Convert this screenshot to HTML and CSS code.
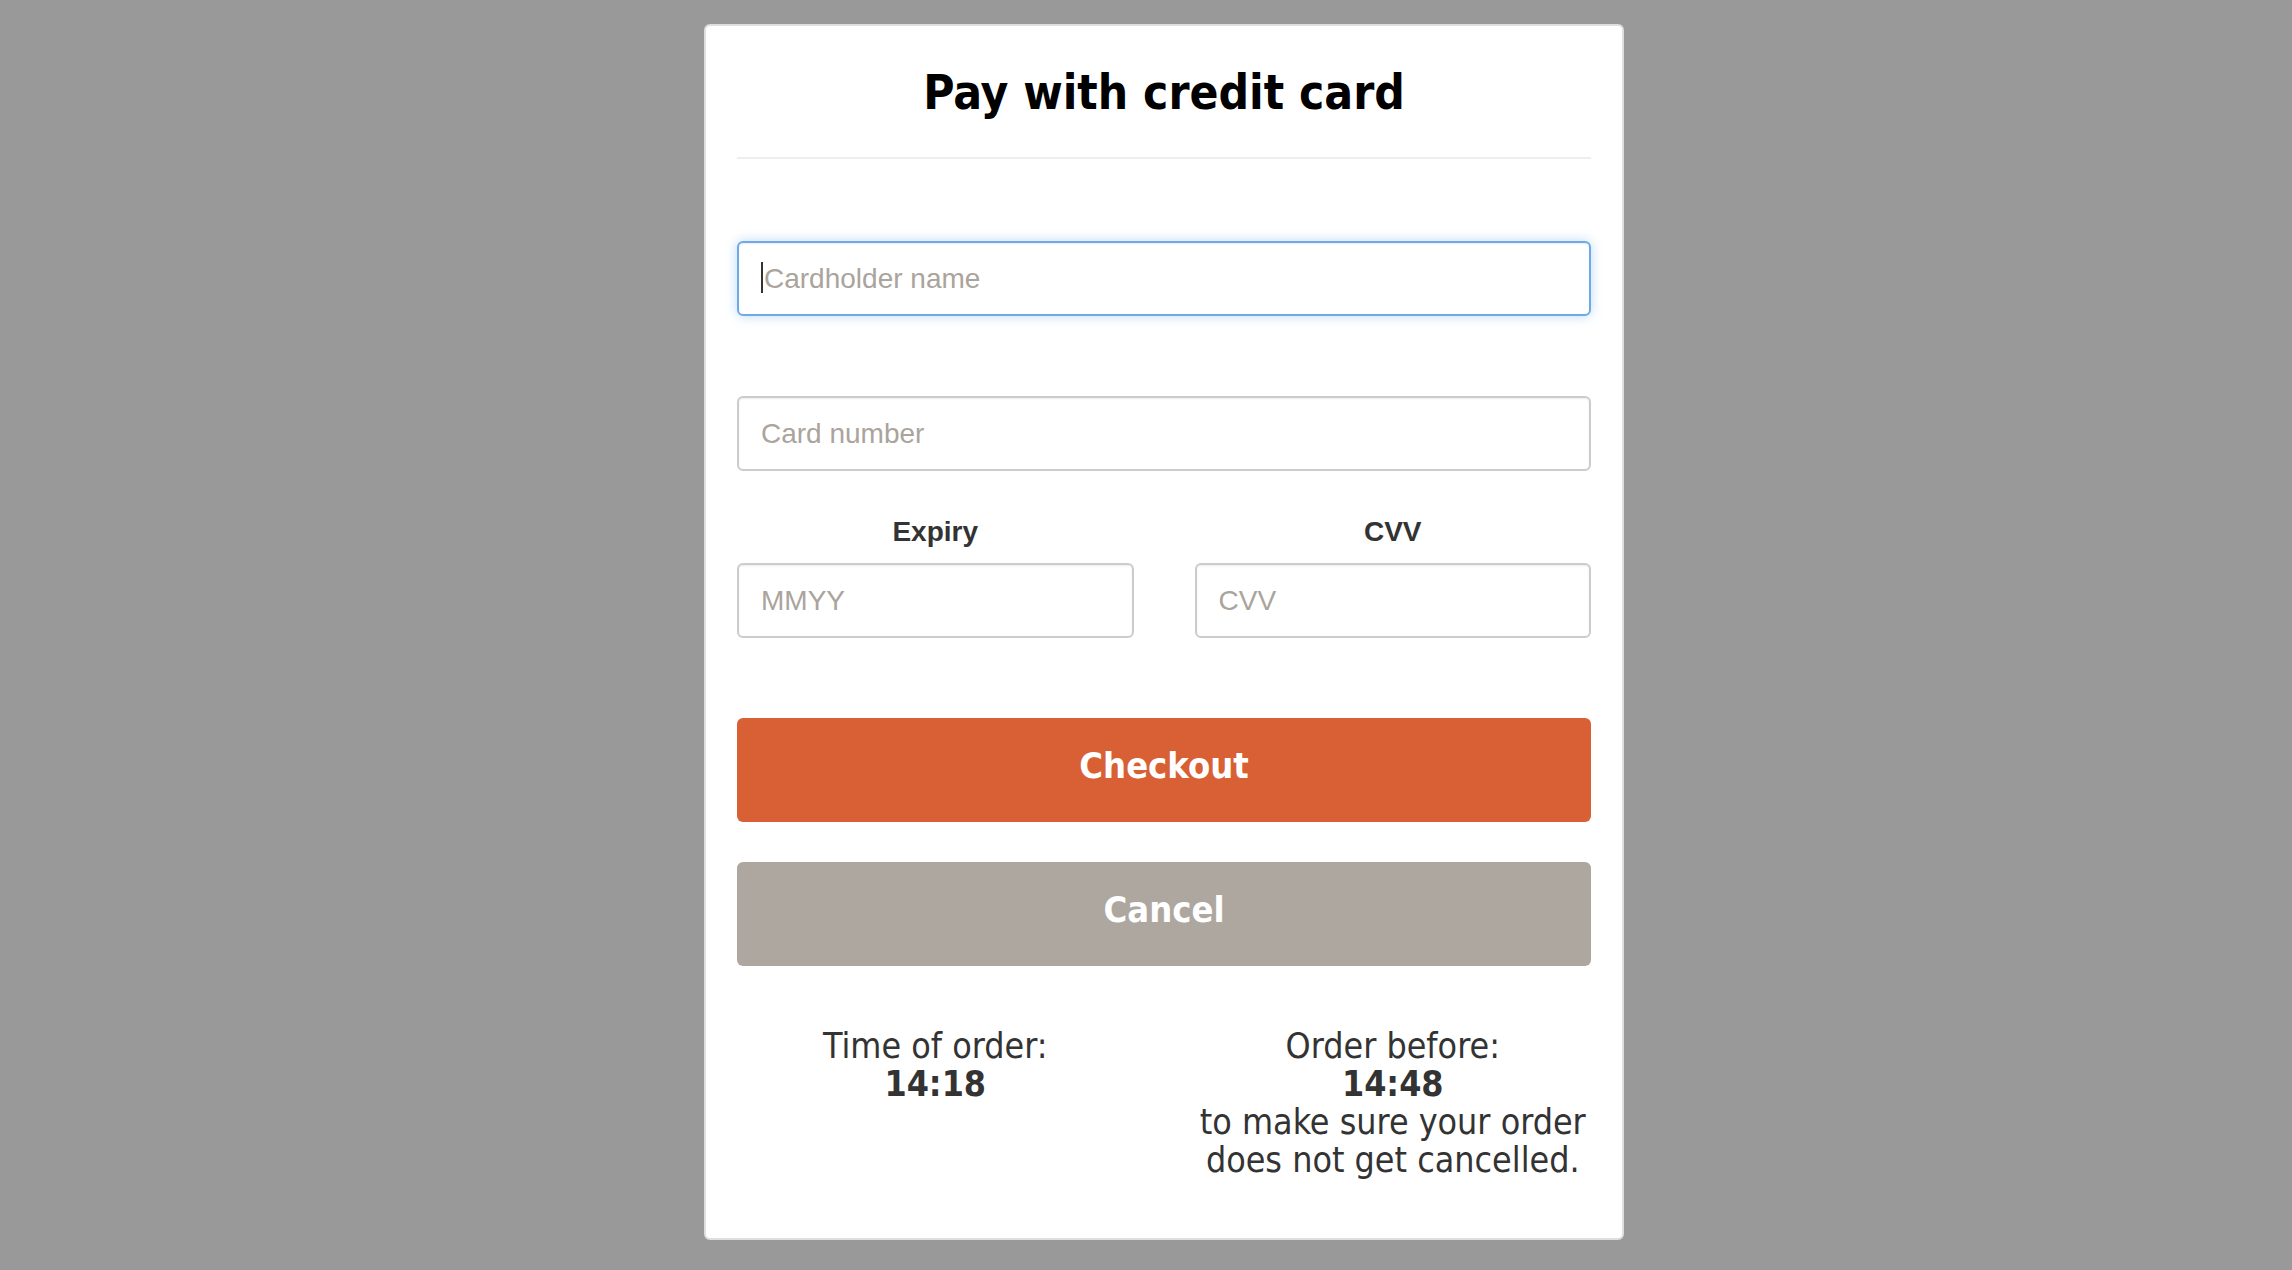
FILE: index.html
```html
<!DOCTYPE html>
<html lang="en">
<head>
<meta charset="utf-8">
<title>Pay with credit card</title>
<link rel="stylesheet" href="styles.css">
</head>
<body>
<div class="page">
  <div class="modal">
    <h1 class="title">Pay with credit card</h1>
    <hr class="divider">
    <form class="form">
      <div class="field-wrap">
        <input class="field field-focus" type="text" placeholder="Cardholder name">
        <span class="caret"></span>
      </div>
      <input class="field field-number" type="text" placeholder="Card number">
      <div class="pair">
        <div class="col">
          <label class="label">Expiry</label>
          <input class="field" type="text" placeholder="MMYY">
        </div>
        <div class="col">
          <label class="label">CVV</label>
          <input class="field" type="text" placeholder="CVV">
        </div>
      </div>
      <button type="button" class="btn btn-checkout">Checkout</button>
      <button type="button" class="btn btn-cancel">Cancel</button>
    </form>
    <div class="info">
      <div class="info-col">
        Time of order:<br><strong>14:18</strong>
      </div>
      <div class="info-col">
        Order before:<br><strong>14:48</strong><br>to make sure your order<br>does not get cancelled.
      </div>
    </div>
  </div>
</div>
</body>
</html>
```

FILE: styles.css
```css
html, body {
  margin: 0;
  padding: 0;
  background: #999999;
}
.page {
  display: flex;
  justify-content: center;
  padding-left: 36px;
  padding-top: 24px;
}
.modal {
  box-sizing: border-box;
  width: 920px;
  height: 1216px;
  background: #ffffff;
  border: 2px solid #dedede;
  border-radius: 6px;
  padding: 39px 31px 0 31px;
}
.title {
  margin: 0;
  font-family: "DejaVu Sans Condensed", "DejaVu Sans", sans-serif;
  font-weight: bold;
  font-size: 47.5px;
  line-height: 56px;
  text-align: center;
  color: #000;
}
.divider {
  margin: 36px 0 0 0;
  border: 0;
  height: 2px;
  background: #eeeeee;
}
.form {
  display: flex;
  flex-direction: column;
  margin-top: 82px;
}
.field-wrap {
  position: relative;
}
.caret {
  position: absolute;
  left: 24px;
  top: 21px;
  width: 2px;
  height: 31px;
  background: #333;
}
.field {
  box-sizing: border-box;
  width: 100%;
  height: 75px;
  border: 2px solid #cccccc;
  border-radius: 6px;
  padding: 0 22px;
  font-family: "Liberation Sans", Arial, sans-serif;
  font-size: 28px;
  color: #333;
  background: #fff;
  box-shadow: inset 0 1px 2px rgba(0,0,0,0.08);
  outline: none;
}
.field::placeholder {
  color: #aaa49d;
}
.field-focus {
  display: block;
  border-color: #6fa9e6;
  padding-left: 25px;
  box-shadow: inset 0 1px 2px rgba(0,0,0,0.08), 0 0 12px rgba(102,175,233,0.45);
}
.field-number {
  margin-top: 80px;
}
.pair {
  display: grid;
  grid-template-columns: 1fr 1fr;
  column-gap: 61px;
  margin-top: 45px;
}
.col {
  display: flex;
  flex-direction: column;
}
.label {
  font-family: "Liberation Sans", Arial, sans-serif;
  font-weight: bold;
  font-size: 28px;
  line-height: 32px;
  text-align: center;
  color: #333;
  margin-bottom: 15px;
}
.btn {
  height: 104px;
  width: 100%;
  border: 0;
  border-radius: 6px;
  color: #fff;
  font-family: "DejaVu Sans Condensed", "DejaVu Sans", sans-serif;
  font-weight: bold;
  font-size: 36px;
  padding: 0 0 10px 0;
}
.btn-checkout {
  background: #d95f35;
  margin-top: 80px;
}
.btn-cancel {
  background: #ada7a0;
  margin-top: 40px;
}
.info {
  display: grid;
  grid-template-columns: 1fr 1fr;
  column-gap: 61px;
  margin-top: 61px;
  font-family: "DejaVu Sans Condensed", "DejaVu Sans", sans-serif;
  font-size: 35.5px;
  line-height: 38px;
  color: #333;
  text-align: center;
}
.info-col strong {
  font-weight: bold;
}
```
